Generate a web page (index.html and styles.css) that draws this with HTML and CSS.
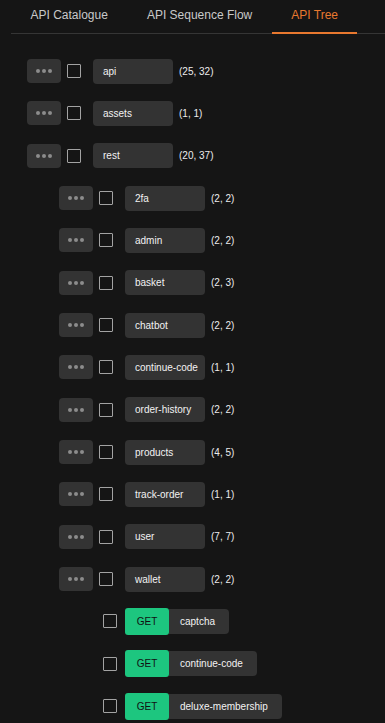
FILE: index.html
```html
<!DOCTYPE html>
<html>
<head>
<meta charset="utf-8">
<link rel="stylesheet" href="styles.css">
</head>
<body>
<div class="tabs">
  <div class="tab">API Catalogue</div>
  <div class="tab">API Sequence Flow</div>
  <div class="tab active">API Tree</div>
</div>
<div class="tree">
  <div class="row lvl0"><span class="more"><i></i><i></i><i></i></span><span class="check"></span><span class="name">api</span><span class="count">(25, 32)</span></div>
  <div class="row lvl0"><span class="more"><i></i><i></i><i></i></span><span class="check"></span><span class="name">assets</span><span class="count">(1, 1)</span></div>
  <div class="row lvl0"><span class="more"><i></i><i></i><i></i></span><span class="check"></span><span class="name">rest</span><span class="count">(20, 37)</span></div>
  <div class="row lvl1"><span class="more"><i></i><i></i><i></i></span><span class="check"></span><span class="name">2fa</span><span class="count">(2, 2)</span></div>
  <div class="row lvl1"><span class="more"><i></i><i></i><i></i></span><span class="check"></span><span class="name">admin</span><span class="count">(2, 2)</span></div>
  <div class="row lvl1"><span class="more"><i></i><i></i><i></i></span><span class="check"></span><span class="name">basket</span><span class="count">(2, 3)</span></div>
  <div class="row lvl1"><span class="more"><i></i><i></i><i></i></span><span class="check"></span><span class="name">chatbot</span><span class="count">(2, 2)</span></div>
  <div class="row lvl1"><span class="more"><i></i><i></i><i></i></span><span class="check"></span><span class="name">continue-code</span><span class="count">(1, 1)</span></div>
  <div class="row lvl1"><span class="more"><i></i><i></i><i></i></span><span class="check"></span><span class="name">order-history</span><span class="count">(2, 2)</span></div>
  <div class="row lvl1"><span class="more"><i></i><i></i><i></i></span><span class="check"></span><span class="name">products</span><span class="count">(4, 5)</span></div>
  <div class="row lvl1"><span class="more"><i></i><i></i><i></i></span><span class="check"></span><span class="name">track-order</span><span class="count">(1, 1)</span></div>
  <div class="row lvl1"><span class="more"><i></i><i></i><i></i></span><span class="check"></span><span class="name">user</span><span class="count">(7, 7)</span></div>
  <div class="row lvl1"><span class="more"><i></i><i></i><i></i></span><span class="check"></span><span class="name">wallet</span><span class="count">(2, 2)</span></div>
  <div class="row leaf"><span class="check"></span><span class="endpoint"><span class="method">GET</span><span class="path">captcha</span></span></div>
  <div class="row leaf"><span class="check"></span><span class="endpoint"><span class="method">GET</span><span class="path">continue-code</span></span></div>
  <div class="row leaf"><span class="check"></span><span class="endpoint"><span class="method">GET</span><span class="path">deluxe-membership</span></span></div>
</div>
</body>
</html>
```

FILE: styles.css
```css
html, body {
  margin: 0;
  padding: 0;
  background: #151515;
  font-family: "Liberation Sans", Arial, sans-serif;
  overflow: hidden;
}

.tabs {
  display: flex;
  margin-left: 11px;
  height: 33px;
  border-bottom: 1px solid #353535;
}

.tab {
  position: relative;
  padding: 8px 19.5px 0;
  font-size: 12px;
  line-height: 14px;
  color: #c9c9c9;
}

.tab.active {
  color: #e8782f;
}

.tab.active::after {
  content: "";
  position: absolute;
  left: 0;
  right: 0;
  bottom: -1px;
  height: 2px;
  background: #e8782f;
}

.tree {
  display: flex;
  flex-direction: column;
  padding-top: 16px;
}

.row {
  display: flex;
  align-items: center;
  height: 42.33px;
  font-size: 10px;
  color: #f2f2f2;
}

.lvl0 { padding-left: 27px; }
.lvl1 { padding-left: 59px; }
.leaf { padding-left: 103px; }

.more {
  display: flex;
  align-items: center;
  justify-content: center;
  gap: 2px;
  width: 34px;
  height: 24px;
  background: #333333;
  border-radius: 4px;
  margin-right: 6px;
}

.more i {
  width: 4px;
  height: 4px;
  border-radius: 50%;
  background: #8c8c8c;
}

.check {
  box-sizing: border-box;
  width: 14px;
  height: 14px;
  border: 1px solid #a3a3a3;
  border-radius: 1px;
}

.name {
  box-sizing: border-box;
  display: flex;
  align-items: center;
  width: 80px;
  height: 25px;
  padding-left: 10px;
  margin-left: 12px;
  background: #333333;
  border-radius: 4px;
  white-space: nowrap;
}

.count {
  margin-left: 6px;
  color: #ececec;
}

.endpoint {
  display: flex;
  align-items: center;
  margin-left: 8px;
}

.method {
  display: flex;
  align-items: center;
  justify-content: center;
  width: 44px;
  height: 27px;
  background: #1dc67f;
  color: #111;
  border-radius: 3px;
  position: relative;
  z-index: 1;
}

.path {
  display: flex;
  align-items: center;
  height: 25px;
  padding: 0 14px 0 11px;
  background: #333333;
  border-radius: 0 4px 4px 0;
  white-space: nowrap;
}
```
